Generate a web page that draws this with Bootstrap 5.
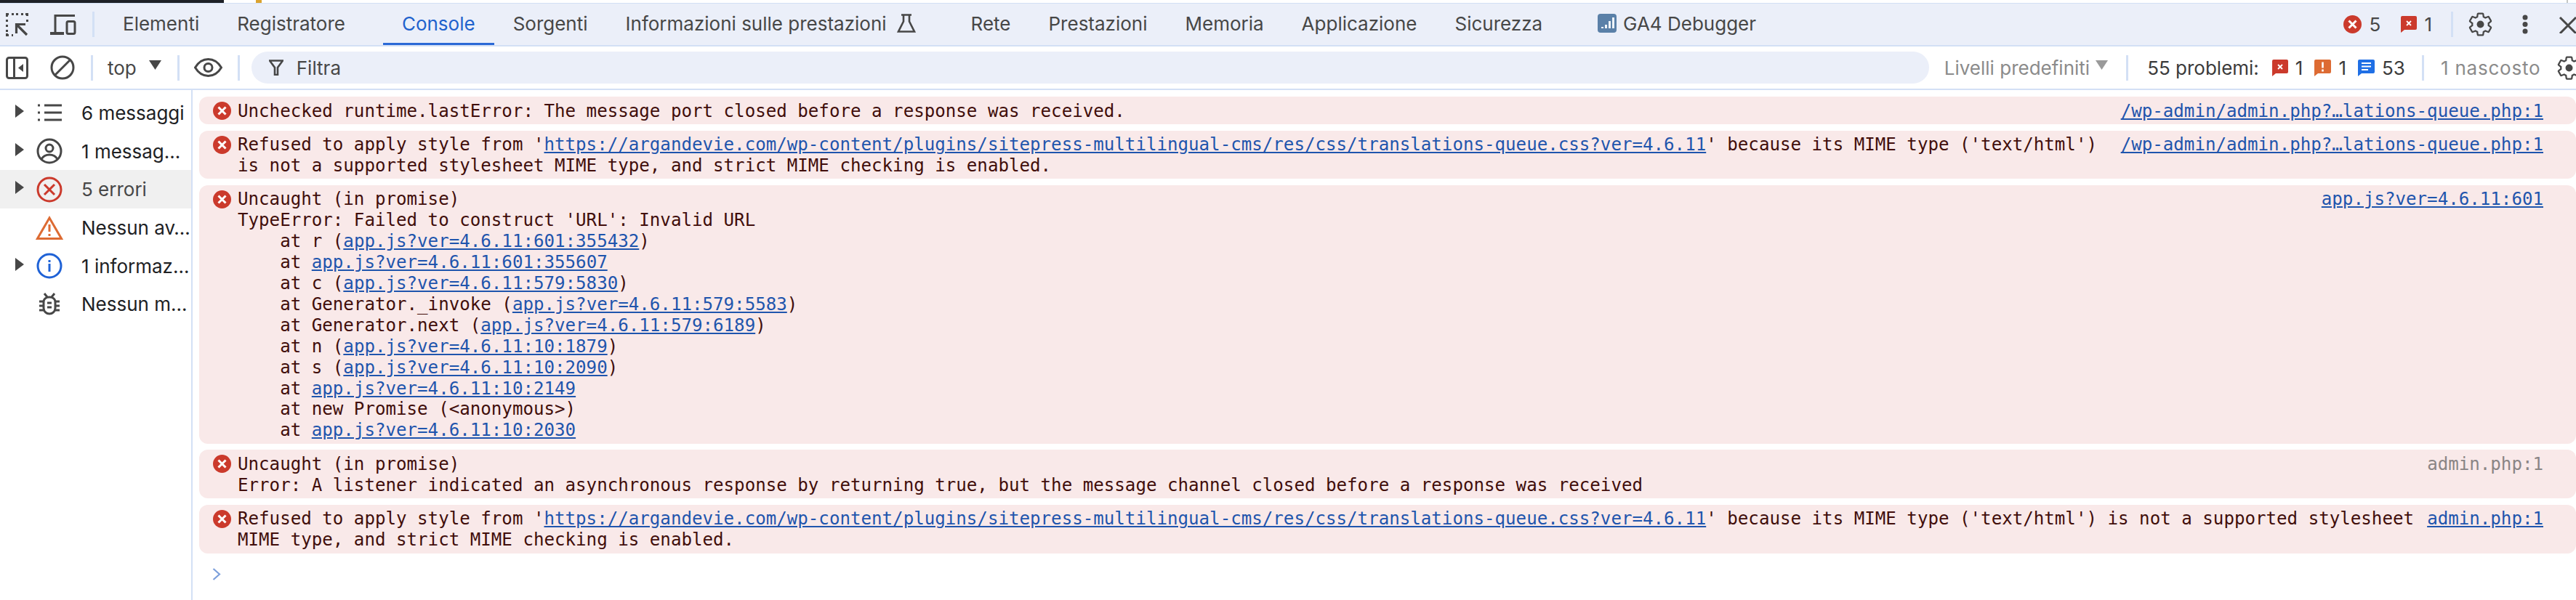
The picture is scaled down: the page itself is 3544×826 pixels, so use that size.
<!DOCTYPE html>
<html lang="it">
<head>
<meta charset="utf-8">
<title>DevTools Console</title>
<link href="https://cdn.jsdelivr.net/npm/bootstrap@5.3.0/dist/css/bootstrap.min.css" rel="stylesheet">
<style>
html,body{height:100%;}
body{background:#fff;font-family:Inter,"Noto Sans",sans-serif;font-size:26px;color:#202124;overflow:hidden;}
.dt-page{width:3544px;height:826px;overflow:hidden;}
.dt-strip{height:5px;border-bottom:1px solid #d3e0f5;background:#fff;}
.dt-strip-a{width:308px;background:#1e2127;}
.dt-strip-b{width:8px;margin-left:44px;background:#dba32f;}
.dt-strip-c{width:2px;background:#c4c7c5;margin-right:11px;}
.dt-tabs{height:59px;background:#ebeff9;border-bottom:2px solid #d3e0f5;color:#474747;}
.dt-bar{height:60px;background:#fff;border-bottom:2px solid #d3e0f5;color:#474747;white-space:nowrap;overflow:hidden;}
.dt-bar>*{flex:none;}
.dt-ico{display:block;flex:none;}
.dt-tool1{margin-left:8px;}
.dt-tool2{margin-left:30px;}
.dt-sep{width:3px;height:35px;background:#d3e0f5;flex:none;}
.dt-tabs .dt-sep{margin-left:22px;}
.dt-bar .dt-sep{margin-left:22px;}
.dt-tabs .nav{height:100%;margin-left:13px;flex-wrap:nowrap;}
.dt-tabs .nav-link{height:100%;padding:0 26px;color:#474747;display:flex;align-items:center;white-space:nowrap;border-bottom:3px solid transparent;margin-bottom:-1px;}
.dt-tabs .nav-link.active{color:#1f62cd;border-bottom-color:#2b69d6;}
.dt-tab-gap{padding-right:52px !important;}
.dt-tab-flask{padding-right:50px !important;}
.dt-tab-flask svg{margin-left:14px;}
.dt-ga{padding-left:50px !important;}
.dt-ga svg{margin-right:9px;}
.dt-tab-right{margin-left:auto;}
.dt-top{margin:0 20px 0 20px;}
.dt-pill{height:44px;width:2308px;margin-left:16px;background:#ebeff9;border-radius:22px;padding-left:24px;color:#474747;}
.dt-pill span{margin-left:18px;}
.dt-muted{color:#8b8b8b;}
.dt-hidden{letter-spacing:.8px;margin-left:23px;}
.dt-dark{color:#3b3b3b;}
.dt-body{height:702px;}
.dt-side{width:265px;flex:none;border-right:2px solid #d3e0f5;padding-top:5px;}
.dt-side .list-group-item{height:52.7px;border:0;padding:0;background:transparent;color:#202124;display:flex;align-items:center;white-space:nowrap;font-size:26px;}
.dt-side .list-group-item.active{background:#f0f0f0;color:#474747;margin:0;}
.dt-caret{width:33px;flex:none;display:flex;justify-content:flex-end;}
.dt-caret svg{display:block;margin-top:-5px;}
.dt-sico{width:70px;flex:none;display:flex;justify-content:center;}
.dt-side-label{margin-left:9px;}
.dt-main{flex:1;min-width:0;padding:9px 0 0 9px;}
.dt-msg{background:#f9e9e9;border-radius:12px;color:#410e0b;font-family:"DejaVu Sans Mono","Liberation Mono",monospace;font-size:24.15px;line-height:28.9px;padding:5.5px 45px 3.5px 19px;margin-bottom:8.6px;white-space:pre;}
.dt-msg svg{flex:none;margin-top:1.5px;margin-right:9px;}
.dt-msg a{color:#1f55ad;text-decoration:underline;}
.dt-src{margin-left:auto;}
.dt-src-grey{margin-left:auto;color:#8a8585;}
.dt-prompt{margin:20px 0 0 18px;display:block;}
</style>
</head>
<body>
<div class="dt-page d-flex flex-column">
  <div class="dt-strip d-flex">
    <div class="dt-strip-a"></div><div class="dt-strip-b"></div><div class="dt-strip-c ms-auto"></div>
  </div>

  <div class="dt-tabs d-flex align-items-center">
    <svg class="dt-ico dt-tool1" width="31" height="32" viewBox="0 0 31 32" fill="none" stroke="#474747" stroke-width="3"><path d="M1.500 5V1.500H4M8 1.500h3M14 1.500h3M21 1.500h3M27 1.500h2.500V4M1.500 9v3M1.500 16v3M1.500 23v3M1.500 28v2.500H4M8 30.500h2M29.500 9v3"/><path d="M29 30 16 17M14.500 28V15.500H27" stroke-width="3.200"/></svg>
    <svg class="dt-ico dt-tool2" width="36" height="30" viewBox="0 0 36 30" fill="none" stroke="#474747" stroke-width="3"><path d="M7 25V2.500h27"/><path d="M0 27h19" stroke-width="4"/><rect x="23" y="10.500" width="11" height="17" rx="2"/></svg>
    <div class="dt-sep"></div>
    <ul class="nav">
      <li class="nav-item"><a class="nav-link" href="#">Elementi</a></li>
      <li class="nav-item"><a class="nav-link dt-tab-gap" href="#">Registratore</a></li>
      <li class="nav-item"><a class="nav-link active" href="#">Console</a></li>
      <li class="nav-item"><a class="nav-link" href="#">Sorgenti</a></li>
      <li class="nav-item"><a class="nav-link dt-tab-flask" href="#">Informazioni sulle prestazioni<svg width="26" height="26" viewBox="0 0 26 26" fill="none" stroke="#474747" stroke-width="2.600"><path d="M6 1.500h14M9 1.500v9L2 24.500h22L17 10.500v-9"/></svg></a></li>
      <li class="nav-item"><a class="nav-link" href="#">Rete</a></li>
      <li class="nav-item"><a class="nav-link" href="#">Prestazioni</a></li>
      <li class="nav-item"><a class="nav-link" href="#">Memoria</a></li>
      <li class="nav-item"><a class="nav-link" href="#">Applicazione</a></li>
      <li class="nav-item"><a class="nav-link" href="#">Sicurezza</a></li>
      <li class="nav-item"><a class="nav-link dt-ga" href="#"><svg width="26" height="26" viewBox="0 0 26 26"><rect width="26" height="26" rx="4" fill="#5a80a8"/><path d="M5 20v-2h3v2zM10 20v-5h3v5zM15 20V10h3v10zM20 20V5h3v15z" fill="#eef3f8"/></svg>GA4 Debugger</a></li>
    </ul>
    <div class="dt-tab-right d-flex align-items-center">
      <svg class="dt-ico" width="25" height="25" viewBox="0 0 25 25"><circle cx="12.500" cy="12.500" r="12.500" fill="#cb3a2c"/><path d="M7.500 7.500l10 10M17.500 7.500l-10 10" stroke="#fff" stroke-width="3"/></svg>
      <span style="margin-left:11px;margin-right:28px">5</span>
      <svg class="dt-ico" width="22" height="23" viewBox="0 0 22 23"><path d="M2 0h18a2 2 0 0 1 2 2v15a2 2 0 0 1-2 2H5l-5 4V2a2 2 0 0 1 2-2z" fill="#cb3a2c"/><path d="M8 7l6 6M14 7l-6 6" stroke="#fff" stroke-width="1.800"/></svg>
      <span style="margin-left:10px">1</span>
      <div class="dt-sep" style="margin-left:26px"></div>
      <svg class="dt-ico" style="margin-left:21px" width="33" height="33" viewBox="1 1 22 22" fill="none" stroke="#474747" stroke-width="1.500"><path d="M19.430 12.980c.04-.32.07-.64.07-.98s-.03-.66-.07-.98l2.110-1.650c.19-.15.24-.42.12-.64l-2-3.460c-.12-.22-.39-.3-.61-.22l-2.490 1c-.52-.4-1.080-.73-1.690-.98l-.38-2.650C14.460 2.180 14.250 2 14 2h-4c-.25 0-.46.18-.49.42l-.38 2.650c-.61.25-1.170.59-1.690.98l-2.490-1c-.23-.09-.49 0-.61.22l-2 3.460c-.13.22-.07.49.12.64l2.110 1.650c-.04.32-.07.65-.07.98s.03.66.07.98l-2.110 1.650c-.19.15-.24.42-.12.64l2 3.460c.12.22.39.3.61.22l2.490-1c.52.4 1.080.73 1.690.98l.38 2.650c.03.24.24.42.49.42h4c.25 0 .46-.18.49-.42l.38-2.650c.61-.25 1.170-.59 1.690-.98l2.490 1c.23.09.49 0 .61-.22l2-3.460c.12-.22.07-.49-.12-.64l-2.110-1.650z"/><circle cx="12" cy="12" r="3.300" fill="#474747" stroke="none"/></svg>
      <svg class="dt-ico" style="margin-left:41px" width="8" height="27" viewBox="0 0 8 27" fill="#474747"><circle cx="4" cy="4" r="3.500"/><circle cx="4" cy="13.500" r="3.500"/><circle cx="4" cy="23" r="3.500"/></svg>
      <svg class="dt-ico" style="margin-left:42px" width="24" height="24" viewBox="0 0 24 24" stroke="#474747" stroke-width="3"><path d="M2 2l22 22M24 2L2 24"/></svg>
    </div>
  </div>

  <div class="dt-bar d-flex align-items-center">
    <svg class="dt-ico dt-tool1" width="31" height="31" viewBox="0 0 31 31" fill="none" stroke="#474747" stroke-width="3"><rect x="1.500" y="1.500" width="28" height="28" rx="3"/><path d="M11.500 1.500v28"/><path d="M24 10v11l-7-5.500z" fill="#474747" stroke="none"/></svg>
    <svg class="dt-ico dt-tool2" width="34" height="34" viewBox="0 0 34 34" fill="none" stroke="#474747" stroke-width="3"><circle cx="17" cy="17" r="15"/><path d="M7 27 27 7"/></svg>
    <div class="dt-sep"></div>
    <div class="dt-top d-flex align-items-center"><span>top</span><svg style="margin-left:17px;margin-top:-8px" width="17" height="13" viewBox="0 0 17 13"><path d="M0 0h17L8.500 13z" fill="#474747"/></svg></div>
    <div class="dt-sep" style="margin-left:2px"></div>
    <svg class="dt-ico" style="margin-left:20px" width="39" height="26" viewBox="0 0 39 26" fill="none" stroke="#474747" stroke-width="3"><path d="M1.500 13C6 5.500 12 1.500 19.500 1.500S33 5.500 37.500 13C33 20.500 27 24.500 19.500 24.500S6 20.500 1.500 13z"/><circle cx="19.500" cy="13" r="5.500"/></svg>
    <div class="dt-sep" style="margin-left:21px"></div>
    <div class="dt-pill d-flex align-items-center">
      <svg class="dt-ico" width="20" height="22" viewBox="0 0 20 22" fill="none" stroke="#474747" stroke-width="2.600"><path d="M1 1.500h18l-7 9.500v10h-4V11z"/></svg>
      <span>Filtra</span>
    </div>
    <span class="dt-muted" style="margin-left:21px">Livelli predefiniti</span>
    <svg class="ms-2" style="margin-top:-8px" width="17" height="13" viewBox="0 0 17 13"><path d="M0 0h17L8.500 13z" fill="#9a9a9a"/></svg>
    <div class="dt-sep" style="margin-left:25px"></div>
    <span class="dt-dark" style="margin-left:26px">55 problemi:</span>
    <svg class="dt-ico" style="margin-left:18px" width="22" height="23" viewBox="0 0 22 23"><path d="M2 0h18a2 2 0 0 1 2 2v15a2 2 0 0 1-2 2H5l-5 4V2a2 2 0 0 1 2-2z" fill="#cb3a2c"/><path d="M8 7l6 6M14 7l-6 6" stroke="#fff" stroke-width="1.800"/></svg>
    <span class="dt-dark" style="margin-left:10px">1</span>
    <svg class="dt-ico" style="margin-left:16px" width="23" height="23" viewBox="0 0 23 23"><path d="M2 0h19a2 2 0 0 1 2 2v15a2 2 0 0 1-2 2H5l-5 4V2a2 2 0 0 1 2-2z" fill="#dd6b33"/><path d="M11.500 3.500v8M11.500 13.500v3" stroke="#fff" stroke-width="2.600"/></svg>
    <span class="dt-dark" style="margin-left:10px">1</span>
    <svg class="dt-ico" style="margin-left:16px" width="23" height="23" viewBox="0 0 23 23"><path d="M2 0h19a2 2 0 0 1 2 2v15a2 2 0 0 1-2 2H5l-5 4V2a2 2 0 0 1 2-2z" fill="#1f6fe5"/><path d="M5 5h13M5 9.500h13M5 14h9" stroke="#fff" stroke-width="2"/></svg>
    <span class="dt-dark" style="margin-left:10px">53</span>
    <div class="dt-sep" style="margin-left:23px"></div>
    <span class="dt-muted dt-hidden">1 nascosto</span>
    <svg class="dt-ico" style="margin-left:23px" width="33" height="33" viewBox="1 1 22 22" fill="none" stroke="#474747" stroke-width="1.500"><path d="M19.430 12.980c.04-.32.07-.64.07-.98s-.03-.66-.07-.98l2.110-1.650c.19-.15.24-.42.12-.64l-2-3.460c-.12-.22-.39-.3-.61-.22l-2.490 1c-.52-.4-1.080-.73-1.690-.98l-.38-2.650C14.460 2.180 14.250 2 14 2h-4c-.25 0-.46.18-.49.42l-.38 2.650c-.61.25-1.170.59-1.690.98l-2.490-1c-.23-.09-.49 0-.61.22l-2 3.460c-.13.22-.07.49.12.64l2.110 1.650c-.04.32-.07.65-.07.98s.03.66.07.98l-2.110 1.650c-.19.15-.24.42-.12.64l2 3.460c.12.22.39.3.61.22l2.490-1c.52.4 1.080.73 1.690.98l.38 2.650c.03.24.24.42.49.42h4c.25 0 .46-.18.49-.42l.38-2.650c.61-.25 1.170-.59 1.690-.98l2.490 1c.23.09.49 0 .61-.22l2-3.460c.12-.22.07-.49-.12-.64l-2.110-1.650z"/><circle cx="12" cy="12" r="3.300" fill="#474747" stroke="none"/></svg>
  </div>

  <div class="dt-body d-flex">
    <div class="dt-side">
      <div class="list-group list-group-flush">
        <div class="list-group-item"><span class="dt-caret"><svg width="12" height="18" viewBox="0 0 12 18"><path d="M0 0l12 9-12 9z" fill="#474747"/></svg></span><span class="dt-sico"><svg width="33" height="24" viewBox="0 0 33 24" stroke="#474747" stroke-width="3"><path d="M9 2h24M9 12h24M9 22h24"/><path d="M0 2h3M0 12h3M0 22h3"/></svg></span><span class="dt-side-label">6 messaggi</span></div>
        <div class="list-group-item"><span class="dt-caret"><svg width="12" height="18" viewBox="0 0 12 18"><path d="M0 0l12 9-12 9z" fill="#474747"/></svg></span><span class="dt-sico"><svg width="36" height="36" viewBox="0 0 36 36" fill="none" stroke="#474747" stroke-width="3"><circle cx="18" cy="18" r="16"/><circle cx="18" cy="14" r="5"/><path d="M7 29c3-5 7-6 11-6s8 1 11 6"/></svg></span><span class="dt-side-label">1 messag…</span></div>
        <div class="list-group-item active"><span class="dt-caret"><svg width="12" height="18" viewBox="0 0 12 18"><path d="M0 0l12 9-12 9z" fill="#474747"/></svg></span><span class="dt-sico"><svg width="36" height="36" viewBox="0 0 36 36" fill="none" stroke="#cb3a2c" stroke-width="3"><circle cx="18" cy="18" r="16"/><path d="M11 11l14 14M25 11L11 25"/></svg></span><span class="dt-side-label">5 errori</span></div>
        <div class="list-group-item"><span class="dt-caret"></span><span class="dt-sico"><svg width="38" height="33" viewBox="0 0 38 33" fill="none" stroke="#dd6b33" stroke-width="3"><path d="M19 3 2.500 31.500h33z"/><path d="M19 12v10M19 25v3"/></svg></span><span class="dt-side-label">Nessun av…</span></div>
        <div class="list-group-item"><span class="dt-caret"><svg width="12" height="18" viewBox="0 0 12 18"><path d="M0 0l12 9-12 9z" fill="#474747"/></svg></span><span class="dt-sico"><svg width="36" height="36" viewBox="0 0 36 36" fill="none" stroke="#1f62d6" stroke-width="3"><circle cx="18" cy="18" r="16"/><path d="M18 15v11M18 10v3"/></svg></span><span class="dt-side-label">1 informaz…</span></div>
        <div class="list-group-item"><span class="dt-caret"></span><span class="dt-sico"><svg width="28" height="31" viewBox="0 0 28 31" fill="none" stroke="#474747" stroke-width="3"><path d="M7 1l4 5M21 1l-4 5"/><path d="M6 13c0-5 4-7 8-7s8 2 8 7v8c0 5-4 8-8 8s-8-3-8-8z"/><path d="M0 12h6M0 18h6M0 24h6M22 12h6M22 18h6M22 24h6M11 14h6M11 20h6"/></svg></span><span class="dt-side-label">Nessun m…</span></div>
      </div>
    </div>
    <div class="dt-main">
      <div class="dt-msg d-flex">
        <svg width="25" height="25" viewBox="0 0 25 25"><circle cx="12.500" cy="12.500" r="12.500" fill="#cb3a2c"/><path d="M7.500 7.500l10 10M17.500 7.500l-10 10" stroke="#fff" stroke-width="3"/></svg>
        <div><div>Unchecked runtime.lastError: The message port closed before a response was received.</div></div>
        <a class="dt-src" href="#">/wp-admin/admin.php?…lations-queue.php:1</a>
      </div>
      <div class="dt-msg d-flex">
        <svg width="25" height="25" viewBox="0 0 25 25"><circle cx="12.500" cy="12.500" r="12.500" fill="#cb3a2c"/><path d="M7.500 7.500l10 10M17.500 7.500l-10 10" stroke="#fff" stroke-width="3"/></svg>
        <div><div>Refused to apply style from '<a href="#">https://argandevie.com/wp-content/plugins/sitepress-multilingual-cms/res/css/translations-queue.css?ver=4.6.11</a>' because its MIME type ('text/html')</div><div>is not a supported stylesheet MIME type, and strict MIME checking is enabled.</div></div>
        <a class="dt-src" href="#">/wp-admin/admin.php?…lations-queue.php:1</a>
      </div>
      <div class="dt-msg d-flex">
        <svg width="25" height="25" viewBox="0 0 25 25"><circle cx="12.500" cy="12.500" r="12.500" fill="#cb3a2c"/><path d="M7.500 7.500l10 10M17.500 7.500l-10 10" stroke="#fff" stroke-width="3"/></svg>
        <div><div>Uncaught (in promise)</div><div>TypeError: Failed to construct 'URL': Invalid URL</div><div>    at r (<a href="#">app.js?ver=4.6.11:601:355432</a>)</div><div>    at <a href="#">app.js?ver=4.6.11:601:355607</a></div><div>    at c (<a href="#">app.js?ver=4.6.11:579:5830</a>)</div><div>    at Generator._invoke (<a href="#">app.js?ver=4.6.11:579:5583</a>)</div><div>    at Generator.next (<a href="#">app.js?ver=4.6.11:579:6189</a>)</div><div>    at n (<a href="#">app.js?ver=4.6.11:10:1879</a>)</div><div>    at s (<a href="#">app.js?ver=4.6.11:10:2090</a>)</div><div>    at <a href="#">app.js?ver=4.6.11:10:2149</a></div><div>    at new Promise (&lt;anonymous&gt;)</div><div>    at <a href="#">app.js?ver=4.6.11:10:2030</a></div></div>
        <a class="dt-src" href="#">app.js?ver=4.6.11:601</a>
      </div>
      <div class="dt-msg d-flex">
        <svg width="25" height="25" viewBox="0 0 25 25"><circle cx="12.500" cy="12.500" r="12.500" fill="#cb3a2c"/><path d="M7.500 7.500l10 10M17.500 7.500l-10 10" stroke="#fff" stroke-width="3"/></svg>
        <div><div>Uncaught (in promise)</div><div>Error: A listener indicated an asynchronous response by returning true, but the message channel closed before a response was received</div></div>
        <span class="dt-src-grey">admin.php:1</span>
      </div>
      <div class="dt-msg d-flex">
        <svg width="25" height="25" viewBox="0 0 25 25"><circle cx="12.500" cy="12.500" r="12.500" fill="#cb3a2c"/><path d="M7.500 7.500l10 10M17.500 7.500l-10 10" stroke="#fff" stroke-width="3"/></svg>
        <div><div>Refused to apply style from '<a href="#">https://argandevie.com/wp-content/plugins/sitepress-multilingual-cms/res/css/translations-queue.css?ver=4.6.11</a>' because its MIME type ('text/html') is not a supported stylesheet</div><div>MIME type, and strict MIME checking is enabled.</div></div>
        <a class="dt-src" href="#">admin.php:1</a>
      </div>
      <svg class="dt-prompt" width="12" height="17" viewBox="0 0 12 17" fill="none" stroke="#7c9fdb" stroke-width="2.200"><path d="M1.500 1 10 8.500 1.500 16"/></svg>
    </div>
  </div>
</div>
<script src="https://cdn.jsdelivr.net/npm/bootstrap@5.3.0/dist/js/bootstrap.bundle.min.js"></script>
</body>
</html>
